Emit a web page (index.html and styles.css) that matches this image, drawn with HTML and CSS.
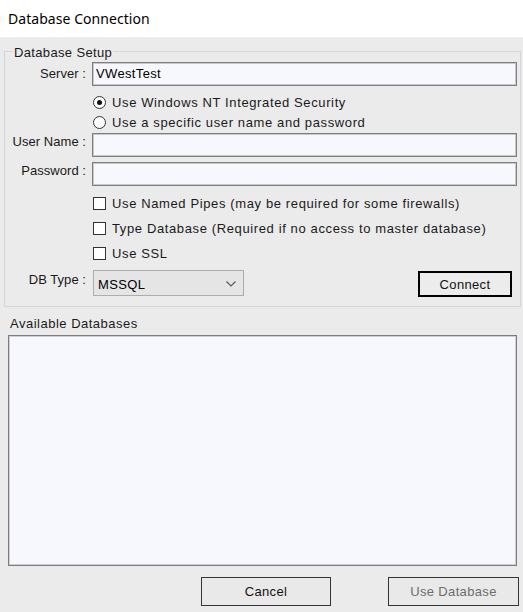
FILE: index.html
```html
<!DOCTYPE html>
<html>
<head>
<meta charset="utf-8">
<title>Database Connection</title>
<link rel="stylesheet" href="styles.css">
</head>
<body>
<div class="titlebar">Database Connection</div>
<div class="window">
  <fieldset class="setup">
    <legend>Database Setup</legend>
    <div class="form">
      <label class="lbl lbl-server">Server :</label>
      <div class="textbox">VWestTest</div>

      <div class="opt radio-row first-radio"><span class="radio checked"></span><span>Use Windows NT Integrated Security</span></div>
      <div class="opt radio-row"><span class="radio"></span><span>Use a specific user name and password</span></div>

      <label class="lbl lbl-user">User Name :</label>
      <div class="textbox tb-user"></div>

      <label class="lbl lbl-pass">Password :</label>
      <div class="textbox tb-pass"></div>

      <div class="opt check-row first-check"><span class="check"></span><span>Use Named Pipes (may be required for some firewalls)</span></div>
      <div class="opt check-row"><span class="check"></span><span>Type Database (Required if no access to master database)</span></div>
      <div class="opt check-row"><span class="check"></span><span>Use SSL</span></div>

      <label class="lbl lbl-db">DB Type :</label>
      <div class="db-row">
        <div class="select"><span>MSSQL</span>
          <svg class="chev" width="10" height="6" viewBox="0 0 10 6"><path d="M0.5 0.5 L5 5 L9.5 0.5" fill="none" stroke="#555" stroke-width="1.1"/></svg>
        </div>
        <div class="btn btn-connect">Connect</div>
      </div>
    </div>
  </fieldset>

  <div class="avail">Available Databases</div>
  <div class="listbox"></div>

  <div class="buttons">
    <div class="btn btn-cancel">Cancel</div>
    <div class="btn btn-use disabled">Use Database</div>
  </div>
</div>
</body>
</html>
```
FILE: styles.css
```css
html, body {
  margin: 0;
  padding: 0;
}
body {
  width: 523px;
  height: 612px;
  background: #ebebeb;
  font-family: "Liberation Sans", Arial, sans-serif;
  font-size: 13px;
  letter-spacing: 0.35px;
  color: #1a1a1a;
  overflow: hidden;
}
.titlebar {
  height: 37px;
  background: #ffffff;
  font-family: "Noto Sans", "Open Sans", sans-serif;
  font-size: 14px;
  letter-spacing: 0.05px;
  color: #000;
  line-height: 37px;
  padding-left: 8px;
  box-sizing: border-box;
}
.window {
  display: flex;
  flex-direction: column;
}
.setup {
  margin: 5px 2px 0 4px;
  padding: 0;
  border: 1px solid #d6d6d6;
  min-width: 0;
}
.setup legend {
  margin-left: 8px;
  padding: 3px 1px 0 1px;
  line-height: 15px;
}
.form {
  display: grid;
  grid-template-columns: 81px 1fr;
  column-gap: 6px;
  padding: 2px 3px 9px 0;
}
.lbl {
  grid-column: 1;
  text-align: right;
  line-height: 15px;
  align-self: start;
  letter-spacing: 0.05px;
}
.lbl-server { padding-top: 4px; }
.lbl-user { padding-top: 1px; margin-top: 1px; }
.lbl-pass { padding-top: 1px; margin-top: 5px; }
.lbl-db { padding-top: 2px; margin-top: 4px; }

.textbox {
  grid-column: 2;
  height: 24px;
  box-sizing: border-box;
  background: #f6f8fd;
  border: 1px solid #7d7d7d;
  box-shadow: inset 0 0 0 1px #c9c9c9;
  padding: 0 3px;
  line-height: 22px;
  color: #000;
}
.tb-user { margin-top: 1px; }
.tb-pass { margin-top: 5px; }

.opt {
  grid-column: 2;
  display: flex;
  align-items: center;
  gap: 6px;
  padding-left: 1px;
  letter-spacing: 0.62px;
}
.radio-row { height: 20px; }
.first-radio { margin-top: 6px; }
.check-row { height: 25px; }
.first-check { margin-top: 5px; }

.radio {
  width: 13px;
  height: 13px;
  box-sizing: border-box;
  border: 1px solid #333;
  border-radius: 50%;
  background: #fff;
  display: flex;
  align-items: center;
  justify-content: center;
  flex: none;
}
.radio.checked::after {
  content: "";
  width: 5px;
  height: 5px;
  border-radius: 50%;
  background: #111;
}
.check {
  width: 13px;
  height: 13px;
  box-sizing: border-box;
  border: 1px solid #333;
  background: #fff;
  flex: none;
}

.db-row {
  grid-column: 2;
  margin-top: 4px;
  display: flex;
  justify-content: space-between;
  align-items: flex-start;
  padding-left: 1px;
  padding-right: 5px;
}
.select {
  width: 151px;
  height: 26px;
  box-sizing: border-box;
  background: #e5e5e5;
  border: 1px solid #adadad;
  display: flex;
  align-items: center;
  justify-content: space-between;
  padding: 2px 7px 0 4px;
  color: #000;
}
.chev { margin-top: -1px; }

.btn {
  box-sizing: border-box;
  display: flex;
  align-items: center;
  justify-content: center;
  background: #e9e9e9;
  border: 1px solid #333;
  color: #111;
}
.btn-connect {
  width: 94px;
  height: 26px;
  margin-top: 1px;
  border: 2px solid #000;
  background: #ececec;
  padding-top: 1px;
}

.avail {
  margin: 9px 0 0 10px;
  line-height: 15px;
  height: 19px;
  letter-spacing: 0.5px;
}
.listbox {
  margin: 0 6px 0 8px;
  height: 231px;
  box-sizing: border-box;
  background: #f7f8fe;
  border: 1px solid #7d7d7d;
  box-shadow: inset 0 0 0 1px #cfcfcf;
}
.buttons {
  display: flex;
  justify-content: flex-end;
  gap: 57px;
  margin: 11px 4px 0 0;
}
.btn-cancel {
  width: 130px;
  height: 29px;
}
.btn-use {
  width: 131px;
  height: 29px;
}
.disabled {
  color: #6d6d6d;
}
```
